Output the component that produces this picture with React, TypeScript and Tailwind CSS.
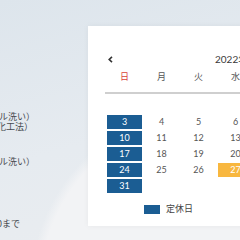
const rows: (number | null)[][] = [
  [null, null, null, null, null, 1, 2],
  [3, 4, 5, 6, 7, 8, 9],
  [10, 11, 12, 13, 14, 15, 16],
  [17, 18, 19, 20, 21, 22, 23],
  [24, 25, 26, 27, 28, 29, 30],
  [31, null, null, null, null, null, null],
];

const closed = [3, 10, 17, 24, 31];
const special = [27];
const weekdays = ["日", "月", "火", "水", "木", "金", "土"];

const App = () => {
  return (
    <div className="relative w-[240px] h-[240px] overflow-hidden flex bg-[radial-gradient(circle_at_215px_290px,#f2f3f5_0,#f2f3f5_175px,rgba(242,243,245,0)_185px),linear-gradient(165deg,#dde5ec_0%,#e6ebf0_55%,#eaedf0_100%)] font-['Lato','Noto_Sans_CJK_JP',sans-serif]">
      <div className="w-[88px] shrink-0 pt-[112px] text-[9px] leading-[10px] text-[#464a4f] whitespace-nowrap font-['Noto_Sans_CJK_JP',sans-serif]">
        <p className="-ml-[1px]">ル洗い）</p>
        <p className="-ml-[3px]">化工法）</p>
        <p className="mt-[25px] -ml-[1px]">ル洗い）</p>
        <p className="mt-[52px] -ml-[3px]">0まで</p>
      </div>

      <div className="mt-[26px] w-[300px] h-[200px] shrink-0 bg-white shadow-[0_0_6px_rgba(0,0,0,0.05)] pl-[19px] pt-[29px]">
        <div className="flex items-center h-[8px]">
          <svg width="5" height="7" viewBox="0 0 5 7" className="ml-[1px]">
            <polyline points="4,0.8 1.2,3.5 4,6.2" fill="none" stroke="#333" strokeWidth="1.6" />
          </svg>
          <span className="ml-[102px] text-[10px] leading-[10px] text-[#3a3a3a]">2022年 4月</span>
        </div>

        <div className="mt-[9px] grid grid-cols-[repeat(7,35px)] gap-x-[2px] border-b-2 border-[#cfcfcf] pb-[10px] w-[270px] -ml-[2px] pl-[2px]">
          {weekdays.map((d, i) => (
            <div
              key={d}
              className={`text-center text-[9px] leading-[10px] font-['Noto_Sans_CJK_JP',sans-serif] ${i === 0 ? "text-[#d9433a]" : "text-[#555]"}`}
            >
              {d}
            </div>
          ))}
        </div>

        <div className="mt-[5px] grid grid-cols-[repeat(7,35px)] gap-x-[2px] gap-y-[2px]">
          {rows.flat().map((n, i) => (
            <div
              key={i}
              className={`h-[14px] flex items-center justify-center text-[9px] ${
                n !== null && closed.includes(n)
                  ? "bg-[#1b5d93] text-white"
                  : n !== null && special.includes(n)
                  ? "bg-[#f8b73f] text-white"
                  : "text-[#555]"
              }`}
            >
              {n ?? ""}
            </div>
          ))}
        </div>

        <div className="mt-[11px] ml-[37px] flex items-center gap-[6px]">
          <span className="w-[16px] h-[9px] bg-[#1b5d93]" />
          <span className="text-[9px] leading-[10px] text-[#444] font-['Noto_Sans_CJK_JP',sans-serif]">定休日</span>
        </div>
      </div>
    </div>
  );
};

export default App;
